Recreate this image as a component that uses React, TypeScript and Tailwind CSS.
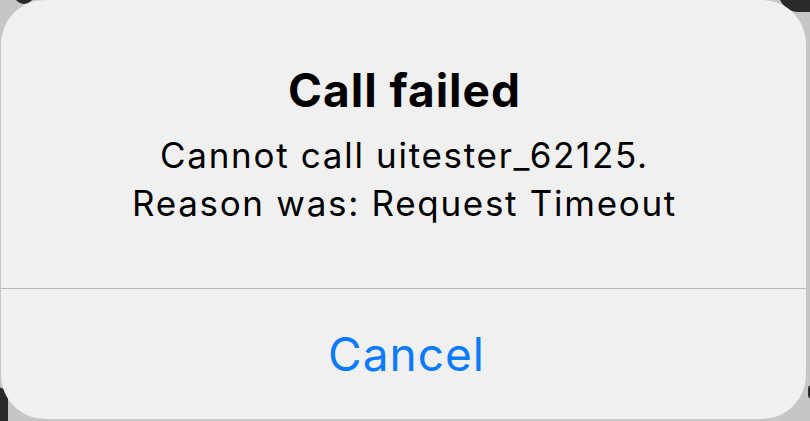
export default function App() {
  return (
    <div className="relative w-[810px] h-[421px] overflow-hidden bg-[#c6c6c6] font-['Inter',sans-serif]">
      {/* dark backdrop shapes peeking around the alert */}
      <div className="absolute left-[14px] top-[-18px] w-[20px] h-[22px] rounded-full bg-[#2a2a2a]" />
      <div className="absolute right-[-20px] top-[-30px] w-[52px] h-[42px] rounded-full bg-[#2a2a2a]" />
      <div className="absolute left-[-14px] bottom-[-10px] w-[22px] h-[44px] rounded-full bg-[#2a2a2a]" />
      <div className="absolute right-[-6px] bottom-[22px] w-[8px] h-[14px] rounded-full bg-[#2a2a2a]" />

      <div className="relative ml-[1px] w-[805px] h-[419px] rounded-[44px] bg-[#f0f0f0] flex flex-col">
        <div className="flex flex-col items-center pt-[62px] pb-[61px] pl-[2px]">
          <h1 className="text-[46px] leading-[56px] font-bold tracking-[1px] text-black">
            Call failed
          </h1>
          <p className="mt-[13px] text-[35px] leading-[48px] tracking-[1.7px] text-black text-center">
            Cannot call uitester_62125.
            <br />
            Reason was: Request Timeout
          </p>
        </div>
        <div className="h-px bg-[#b8b8b8]" />
        <button className="flex-1 flex items-center justify-center pl-[6px] text-[46px] tracking-[1px] text-[#0a7aff]">
          Cancel
        </button>
      </div>
    </div>
  );
}
